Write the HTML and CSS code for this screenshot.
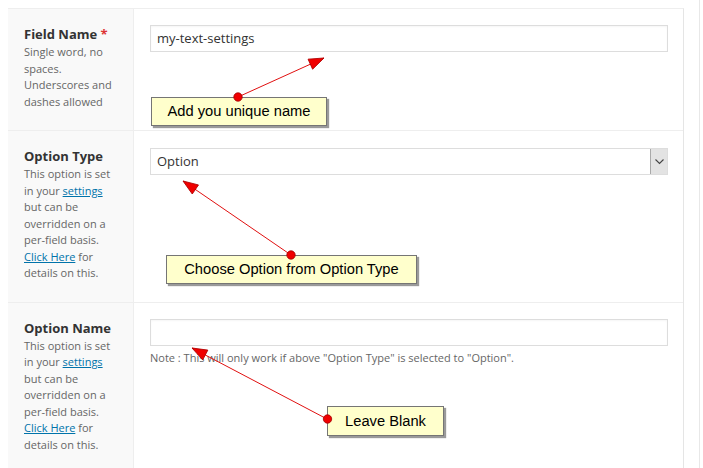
FILE: index.html
```html
<!DOCTYPE html>
<html>
<head>
<meta charset="utf-8">
<link rel="stylesheet" href="styles.css">
</head>
<body>
<div class="frame">
  <div class="table">
    <div class="row">
      <div class="label-cell">
        <div class="label">Field Name <span class="req">*</span></div>
        <div class="desc">Single word, no spaces. Underscores and dashes allowed</div>
      </div>
      <div class="field-cell">
        <div class="input">my-text-settings</div>
      </div>
    </div>
    <div class="row">
      <div class="label-cell">
        <div class="label">Option Type</div>
        <div class="desc">This option is set in your <a href="#">settings</a> but can be overridden on a per-field basis. <a href="#">Click Here</a> for details on this.</div>
      </div>
      <div class="field-cell">
        <div class="select">
          <span class="select-text">Option</span>
          <span class="select-btn">
            <svg width="9" height="6" viewBox="0 0 9 6"><polyline points="0.5,0.5 4.5,4.5 8.5,0.5" fill="none" stroke="#444" stroke-width="1.1"/></svg>
          </span>
        </div>
      </div>
    </div>
    <div class="row row-last">
      <div class="label-cell">
        <div class="label">Option Name</div>
        <div class="desc">This option is set in your <a href="#">settings</a> but can be overridden on a per-field basis. <a href="#">Click Here</a> for details on this.</div>
      </div>
      <div class="field-cell">
        <div class="input"></div>
        <p class="note">Note : This will only work if above "Option Type" is selected to "Option".</p>
      </div>
    </div>
  </div>
</div>

<div class="callout callout-1">Add you unique name</div>
<div class="callout callout-2">Choose Option from Option Type</div>
<div class="callout callout-3">Leave Blank</div>

<svg class="arrows" width="703" height="468" viewBox="0 0 703 468">
  <defs>
    <marker id="ah" markerWidth="18" markerHeight="14" refX="16" refY="6.5" orient="auto" markerUnits="userSpaceOnUse">
      <path d="M1,1 L16,6.5 L1,12 z" fill="#f00000" stroke="#b00000" stroke-width="0.8"/>
    </marker>
  </defs>
  <line x1="238" y1="97" x2="324" y2="58" stroke="#e01010" stroke-width="1" marker-end="url(#ah)"/>
  <line x1="291" y1="255" x2="183" y2="181" stroke="#e01010" stroke-width="1" marker-end="url(#ah)"/>
  <line x1="327" y1="419" x2="192" y2="348" stroke="#e01010" stroke-width="1" marker-end="url(#ah)"/>
  <circle cx="238" cy="97" r="4.2" fill="#f00000" stroke="#a00000" stroke-width="0.8"/>
  <circle cx="291" cy="255" r="4.2" fill="#f00000" stroke="#a00000" stroke-width="0.8"/>
  <circle cx="327.5" cy="419" r="4.2" fill="#f00000" stroke="#a00000" stroke-width="0.8"/>
</svg>
</body>
</html>
```

FILE: styles.css
```css
html, body {
  margin: 0;
  padding: 0;
  background: #ffffff;
  height: 100%;
  overflow: hidden;
}

body {
  font-family: "Open Sans", "Noto Sans", sans-serif;
  color: #32373c;
  position: relative;
}

.frame {
  box-sizing: border-box;
  width: 700px;
  height: 468px;
  padding: 8px 0 0 8px;
  border-right: 1px solid #e8e8e8;
  overflow: hidden;
}

.table {
  box-sizing: border-box;
  width: 676px;
  height: 460px;
  border-top: 1px solid #eeeeee;
  border-right: 1px solid #e5e5e5;
  display: flex;
  flex-direction: column;
  overflow: hidden;
}

.row {
  display: grid;
  grid-template-columns: 126px 1fr;
  border-bottom: 1px solid #eeeeee;
}

.row-last {
  border-bottom: none;
  flex: 1 0 auto;
}

.label-cell {
  box-sizing: border-box;
  background: #f9f9f9;
  border-right: 1px solid #eeeeee;
  padding: 15px 12px 20px 16px;
}

.label {
  font-size: 13px;
  font-weight: 700;
  line-height: 20px;
  color: #333333;
}

.req {
  color: #dd3333;
}

.desc {
  font-size: 11px;
  line-height: 16.5px;
  color: #666666;
}

.desc a {
  color: #0073aa;
  text-decoration: underline;
}

.field-cell {
  padding: 16px 15px 0 16px;
}

.input {
  box-sizing: border-box;
  width: 518px;
  height: 27px;
  border: 1px solid #dddddd;
  box-shadow: inset 0 1px 2px rgba(0,0,0,0.04);
  background: #ffffff;
  font-size: 13px;
  line-height: 25px;
  padding: 0 6px;
  color: #333333;
}

.select {
  box-sizing: border-box;
  width: 518px;
  height: 27px;
  border: 1px solid #dddddd;
  background: #ffffff;
  display: flex;
  align-items: stretch;
  justify-content: space-between;
  margin-top: 1px;
}

.select-text {
  font-size: 13px;
  line-height: 25px;
  padding-left: 6px;
  color: #333333;
}

.select-btn {
  box-sizing: border-box;
  width: 17px;
  background: #e3e3e3;
  border-left: 1px solid #a9a9a9;
  display: flex;
  align-items: center;
  justify-content: center;
}

.note {
  margin: 4px 0 0 0;
  font-size: 11px;
  line-height: 16px;
  color: #666666;
}

.callout {
  position: absolute;
  box-sizing: border-box;
  background: #ffffcc;
  border: 1px solid #757575;
  box-shadow: 2px 2px 1px #9a9a9a;
  font-family: "Liberation Sans", Arial, sans-serif;
  font-size: 14.7px;
  color: #000000;
  text-align: center;
}

.callout-1 {
  left: 151px;
  top: 97px;
  width: 176px;
  height: 29px;
  line-height: 27px;
}

.callout-2 {
  left: 166px;
  top: 255px;
  width: 251px;
  height: 29px;
  line-height: 27px;
}

.callout-3 {
  left: 327px;
  top: 406px;
  width: 117px;
  height: 30px;
  line-height: 28px;
}

.arrows {
  position: absolute;
  left: 0;
  top: 0;
  pointer-events: none;
}
```
